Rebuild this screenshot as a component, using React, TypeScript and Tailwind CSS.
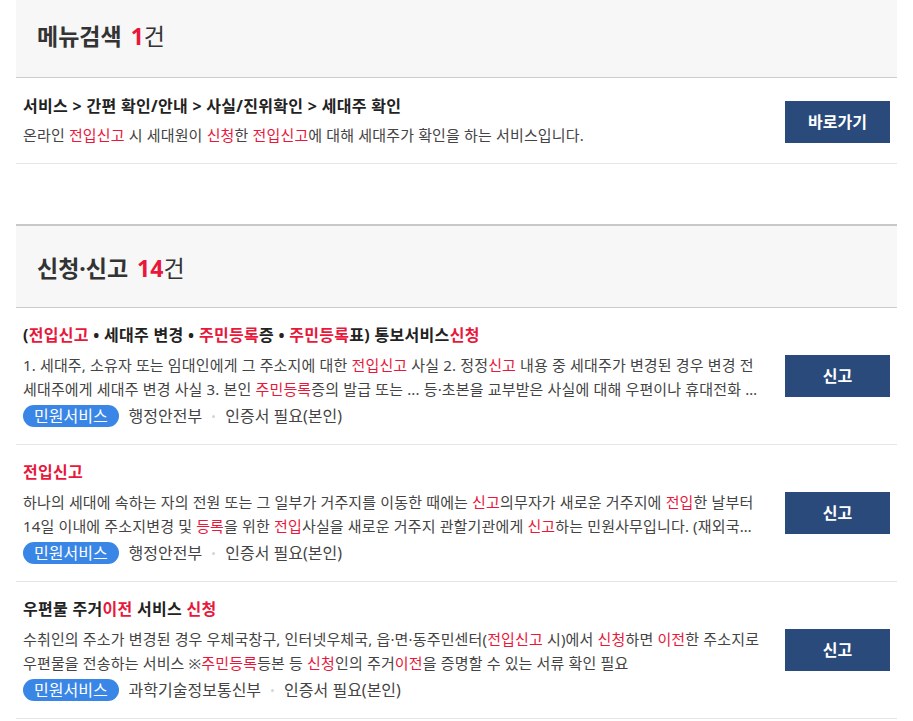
import React from "react";

type Part = string | { r: string };

const hl = (s: string): Part => ({ r: s });

function Rich({ parts }: { parts: Part[] }) {
  return (
    <>
      {parts.map((p, i) =>
        typeof p === "string" ? (
          <React.Fragment key={i}>{p}</React.Fragment>
        ) : (
          <span key={i} className="text-[#e8173c]">
            {p.r}
          </span>
        )
      )}
    </>
  );
}

const items = [
  {
    id: 1,
    title: ["(", hl("전입신고"), " • 세대주 변경 • ", hl("주민등록"), "증 • ", hl("주민등록"), "표) 통보서비스", hl("신청")],
    desc: [
      "1. 세대주, 소유자 또는 임대인에게 그 주소지에 대한 ",
      hl("전입신고"),
      " 사실 2. 정정",
      hl("신고"),
      " 내용 중 세대주가 변경된 경우 변경 전 세대주에게 세대주 변경 사실 3. 본인 ",
      hl("주민등록"),
      "증의 발급 또는 ... 등·초본을 교부받은 사실에 대해 우편이나 휴대전화 문자메시지 등으로 통보하는 서비스입니다.",
    ],
    org: "행정안전부",
  },
  {
    id: 2,
    title: [hl("전입신고")],
    desc: [
      "하나의 세대에 속하는 자의 전원 또는 그 일부가 거주지를 이동한 때에는 ",
      hl("신고"),
      "의무자가 새로운 거주지에 ",
      hl("전입"),
      "한 날부터 14일 이내에 주소지변경 및 ",
      hl("등록"),
      "을 위한 ",
      hl("전입"),
      "사실을 새로운 거주지 관할기관에게 ",
      hl("신고"),
      "하는 민원사무입니다. (재외국민 포함)",
    ],
    org: "행정안전부",
  },
  {
    id: 3,
    title: ["우편물 주거", hl("이전"), " 서비스 ", hl("신청")],
    desc: [
      "수취인의 주소가 변경된 경우 우체국창구, 인터넷우체국, 읍·면·동주민센터(",
      hl("전입신고"),
      " 시)에서 ",
      hl("신청"),
      "하면 ",
      hl("이전"),
      "한 주소지로 우편물을 전송하는 서비스 ※",
      hl("주민등록"),
      "등본 등 ",
      hl("신청"),
      "인의 주거",
      hl("이전"),
      "을 증명할 수 있는 서류 확인 필요",
    ],
    org: "과학기술정보통신부",
  },
];

function SectionHeader({ name, count, first }: { name: string; count: number; first?: boolean }) {
  return (
    <div
      className={`bg-[#f7f7f7] border-b border-[#cccccc] pl-[21px] ${
        first ? "pt-[21px] pb-[26px]" : "border-t-2 border-t-[#c8c8c8] pt-[27px] pb-[24px]"
      }`}
    >
      <h2 className="text-[23px] leading-[30px] font-bold text-[#333]">
        {name}
        <span className="ml-[9px] text-[#e8173c]">{count}</span>
        <span className="font-normal">건</span>
      </h2>
    </div>
  );
}

function ActionButton({ label }: { label: string }) {
  return (
    <button className="w-[105px] h-[42px] shrink-0 bg-[#2a4a7c] text-white text-[16px] font-bold">
      {label}
    </button>
  );
}

export default function App() {
  return (
    <div
      className="min-h-screen bg-white px-4 text-[#333]"
      style={{ fontFamily: '"Noto Sans", "Noto Sans CJK KR", sans-serif' }}
    >
      <section>
        <SectionHeader name="메뉴검색" count={1} first />
        <div className="flex items-center justify-between border-b border-[#e5e5e5] pl-[7px] pr-[7px] pt-[18px] pb-[16px]">
          <div>
            <p className="text-[16px] leading-[20px] font-bold tracking-[0.3px] text-[#222]">
              서비스 &gt; 간편 확인/안내 &gt; 사실/진위확인 &gt; 세대주 확인
            </p>
            <p className="mt-[7px] text-[15px] leading-[24px] tracking-[0.15px] text-[#444]">
              <Rich
                parts={[
                  "온라인 ",
                  hl("전입신고"),
                  " 시 세대원이 ",
                  hl("신청"),
                  "한 ",
                  hl("전입신고"),
                  "에 대해 세대주가 확인을 하는 서비스입니다.",
                ]}
              />
            </p>
          </div>
          <ActionButton label="바로가기" />
        </div>
      </section>

      <section className="mt-[60px]">
        <SectionHeader name="신청·신고" count={14} />
        {items.map((item) => (
          <div
            key={item.id}
            className="flex items-center justify-between border-b border-[#e5e5e5] pl-[7px] pr-[7px] pt-[17px] pb-[17px]"
          >
            <div className="w-[738px]">
              <p className="text-[16px] leading-[20px] font-bold tracking-[0.3px] text-[#222]">
                <Rich parts={item.title as Part[]} />
              </p>
              <p className="mt-[8px] text-[15px] leading-[24px] tracking-[0.15px] text-[#444] line-clamp-2">
                <Rich parts={item.desc as Part[]} />
              </p>
              <div className="mt-[4px] h-[22px] leading-[22px] flex items-center text-[16px] text-[#444]">
                <span className="h-[22px] leading-[22px] px-[11px] rounded-full bg-[#3a86e6] text-white">
                  민원서비스
                </span>
                <span className="ml-[10px]">{item.org}</span>
                <span className="mx-[10px] w-[3px] h-[3px] rounded-full bg-[#d5d5d5]" />
                <span>인증서 필요(본인)</span>
              </div>
            </div>
            <ActionButton label="신고" />
          </div>
        ))}
      </section>
    </div>
  );
}
